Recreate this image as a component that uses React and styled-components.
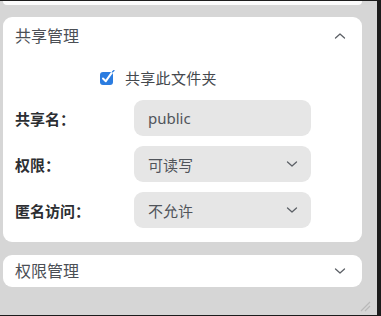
import React, { useState } from "react";
import styled, { createGlobalStyle } from "styled-components";

const GlobalStyle = createGlobalStyle`
    html, body {
        margin: 0;
        padding: 0;
        background: #d6d6d6;
    }
    body {
        font-family: "Noto Sans", "Noto Sans CJK SC", sans-serif;
    }
`;

const Frame = styled.div`
    position: relative;
    box-sizing: border-box;
    width: 381px;
    height: 316px;
    background: #d6d6d6;
    border-top: 1px solid #1c1c1c;
    border-right: 4px solid #1c1c1c;
    border-bottom: 1px solid #1c1c1c;
    overflow: hidden;
`;

const Column = styled.div`
    display: flex;
    flex-direction: column;
    width: 359px;
    padding-left: 3px;
`;

const PrevCard = styled.div`
    height: 4px;
    background: #fbfbfb;
    border-radius: 0 0 8px 8px;
`;

const Card = styled.section`
    background: #ffffff;
    border-radius: 9px;
    margin-top: ${p => p.$gap}px;
    display: flex;
    flex-direction: column;
`;

const Header = styled.div`
    height: ${p => p.$h}px;
    display: flex;
    align-items: center;
    justify-content: space-between;
    padding: 0 16px 0 12px;
`;

const Title = styled.span`
    font-family: "Noto Sans CJK SC", sans-serif;
    font-size: 16px;
    color: #4b4f55;
    margin-top: -2px;
`;

const CheckRow = styled.label`
    height: 45px;
    display: flex;
    align-items: center;
    gap: 10px;
    padding-left: 96px;
    font-family: "Noto Sans CJK SC", sans-serif;
    font-size: 15px;
    letter-spacing: 0.3px;
    color: #44484d;
`;

const Form = styled.div`
    display: grid;
    grid-template-columns: 119px 177px;
    grid-auto-rows: 36px;
    row-gap: 10px;
    padding: 0 0 14px 12px;
`;

const Label = styled.span`
    display: flex;
    align-items: center;
    font-family: "Noto Sans CJK SC", sans-serif;
    font-size: 15px;
    font-weight: 700;
    color: #2c2e32;
`;

const Field = styled.div`
    display: flex;
    align-items: center;
    justify-content: space-between;
    background: #e6e6e6;
    border-radius: 9px;
    padding: 0 13px 0 14px;
    font-family: ${p => (p.$latin ? '"Noto Sans", sans-serif' : '"Noto Sans CJK SC", sans-serif')};
    font-size: 15px;
    color: #50545a;
`;

const Grip = styled.svg`
    position: absolute;
    right: 6px;
    bottom: 3px;
`;

const Chevron = ({ up }) => (
    <svg width="12" height="8" viewBox="0 0 12 8">
        <path
            d={up ? "M1.5 6 L6 2 L10.5 6" : "M1.5 2 L6 6 L10.5 2"}
            fill="none"
            stroke="#5c6066"
            strokeWidth="1.3"
            strokeLinecap="round"
            strokeLinejoin="round"
        />
    </svg>
);

const CheckBox = () => (
    <svg width="16" height="16" viewBox="0 0 16 16">
        <rect x="1" y="2" width="13" height="13" rx="3" fill="#2b7ce0" />
        <path d="M4 8.5 L6.8 11.2 L12.5 3.2" fill="none" stroke="#ffffff" strokeWidth="2" strokeLinecap="round" strokeLinejoin="round" />
        <path d="M13.6 1.8 L15 0.6" stroke="#2b7ce0" strokeWidth="1.3" strokeLinecap="round" />
    </svg>
);

const App = () => {
    const [share] = useState({ name: "public", perm: "可读写", anon: "不允许" });

    return (
        <>
            <GlobalStyle />
            <Frame>
                <Column>
                    <PrevCard />
                    <Card $gap={12}>
                        <Header $h={38}>
                            <Title>共享管理</Title>
                            <Chevron up />
                        </Header>
                        <CheckRow>
                            <CheckBox />
                            共享此文件夹
                        </CheckRow>
                        <Form>
                            <Label>共享名：</Label>
                            <Field $latin>{share.name}</Field>
                            <Label>权限：</Label>
                            <Field>
                                {share.perm}
                                <Chevron />
                            </Field>
                            <Label>匿名访问：</Label>
                            <Field>
                                {share.anon}
                                <Chevron />
                            </Field>
                        </Form>
                    </Card>
                    <Card $gap={13}>
                        <Header $h={32}>
                            <Title>权限管理</Title>
                            <Chevron />
                        </Header>
                    </Card>
                </Column>
                <Grip width="12" height="12" viewBox="0 0 12 12">
                    <path d="M2 11 L11 2 M6 11 L11 6" stroke="#b9b9b9" strokeWidth="1.2" />
                </Grip>
            </Frame>
        </>
    );
};

export default App;
